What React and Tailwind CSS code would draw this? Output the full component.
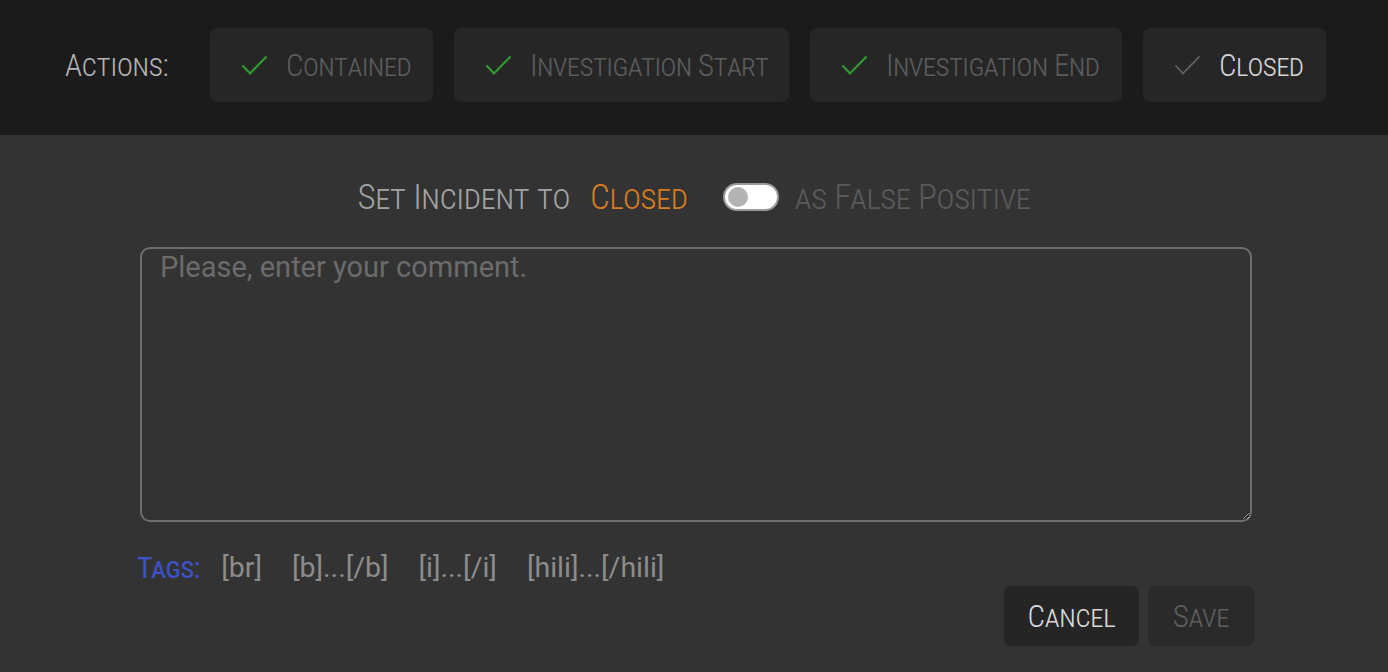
const actions = [
  { label: 'Contained', w: 'w-[223px]', done: true },
  { label: 'Investigation Start', w: 'w-[335px]', done: true },
  { label: 'Investigation End', w: 'w-[312px]', done: true },
  { label: 'Closed', w: 'w-[183px]', done: false },
];

const tags = ['[br]', '[b]...[/b]', '[i]...[/i]', '[hili]...[/hili]'];

const CheckIcon = ({ className, stroke = 2.2 }) => (
  <svg width="27" height="21" viewBox="0 0 27 21" fill="none" className={`shrink-0 ${className}`}>
    <path d="M1.5 10.5 L9 18.5 L25.5 1.5" stroke="currentColor" strokeWidth={stroke} />
  </svg>
);

const caps = "[font-variant-caps:small-caps] [font-stretch:75%] leading-none";

const App = () => {
  return (
    <div className="min-h-screen bg-[#333333] font-['Roboto',sans-serif] [color-scheme:dark]">
      <header className="bg-[#1b1b1b] h-[135px] flex items-start pt-[28px] pl-[65px]">
        <div className="h-[74px] flex items-center w-[145px]">
          <span className={`text-[31px] font-light text-[#b4b4b4] tracking-[-0.2px] ${caps}`}>Actions:</span>
        </div>
        <div className="flex items-center gap-[21px]">
          {actions.map((a) => (
            <button
              key={a.label}
              className={`${a.w} h-[74px] rounded-[7px] bg-[#262626] flex items-center pl-[31px] whitespace-nowrap`}
            >
              <CheckIcon
                className={a.done ? 'text-[#2f9a2f]' : 'text-[#5f5f5f]'}
                stroke={a.done ? 2.2 : 1.8}
              />
              <span
                className={`ml-[18px] text-[31px] font-light tracking-[-0.6px] ${caps} ${a.done ? 'text-[#5c5c5c]' : 'text-[#d4d4d4]'}`}
              >
                {a.label}
              </span>
            </button>
          ))}
        </div>
      </header>

      <main className="pt-[44px]">
        <div className={`flex items-center justify-center h-[36px] text-[35px] font-light tracking-[-0.3px] whitespace-nowrap ${caps}`}>
          <span className="text-[#a3a3a3]">Set Incident to</span>
          <span className="ml-[20px] text-[#d97b1f]">Closed</span>
          <span className="ml-[35px] w-[56px] h-[28px] rounded-full bg-white border-2 border-[#9a9a9a] flex items-center pl-[3px]">
            <span className="w-[20px] h-[20px] rounded-full bg-[#b3b3b3]" />
          </span>
          <span className="ml-[16px] text-[#5a5a5a]">as False Positive</span>
        </div>

        <textarea
          placeholder="Please, enter your comment."
          className="block mt-[32px] ml-[140px] w-[1112px] h-[275px] rounded-[10px] border-2 border-[#6e6e6e] bg-transparent px-[18px] py-0 text-[29px] leading-[36px] text-[#cfcfcf] placeholder:text-[#6b6b6b] outline-none resize"
        />

        <div className="flex items-center ml-[137px] mt-[28px] h-[36px] text-[28.5px] leading-none">
          <span className={`text-[#3c52c8] text-[30px] font-normal tracking-[-0.4px] mr-[21px] ${caps}`}>Tags:</span>
          <div className="flex items-center gap-[30px] text-[#8c8c8c]">
            {tags.map((t) => (
              <span key={t}>{t}</span>
            ))}
          </div>
        </div>

        <div className="flex justify-end gap-[9px] mr-[134px]">
          <button className={`w-[135px] h-[60px] rounded-[7px] bg-[#252525] text-[#d8d8d8] text-[31px] font-light tracking-[-0.3px] ${caps}`}>
            Cancel
          </button>
          <button className={`w-[106px] h-[60px] rounded-[7px] bg-[#2a2a2a] text-[#5e5e5e] text-[31px] font-light tracking-[-0.3px] ${caps}`}>
            Save
          </button>
        </div>
      </main>
    </div>
  );
};

export default App;
